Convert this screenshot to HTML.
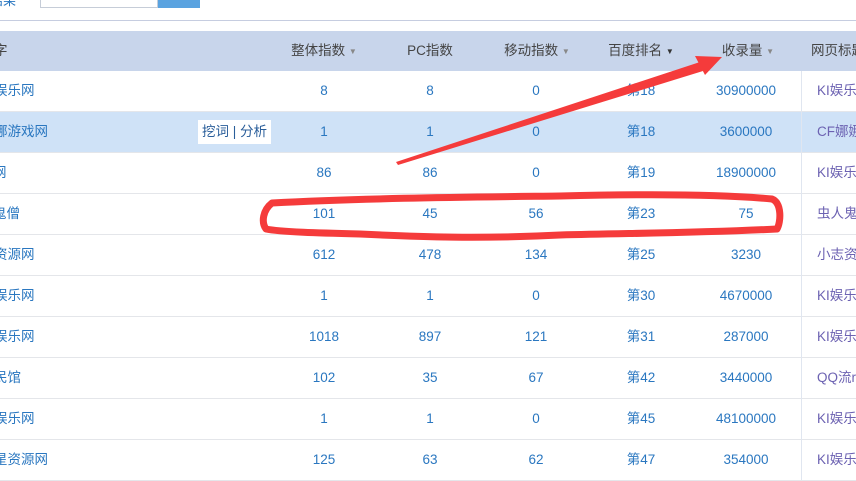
<!DOCTYPE html>
<html><head><meta charset="utf-8"><style>
*{margin:0;padding:0;box-sizing:border-box}
body{width:856px;height:480px;overflow:hidden;background:#fff;font-family:"Liberation Sans","Noto Sans CJK SC",sans-serif;font-size:13.5px;position:relative}
.abs{position:absolute}
.hdr{left:0;top:31px;width:856px;height:40px;background:#c8d5eb}
.h{position:absolute;top:31px;height:40px;line-height:40px;color:#444;font-size:13.5px;transform:translateX(-50%);white-space:nowrap}
.row{position:absolute;left:0;width:856px;height:41px;border-bottom:1px solid #e4e6ea}
.c{position:absolute;line-height:40px;color:#2a77c0;transform:translateX(-50%);white-space:nowrap}
.l{position:absolute;line-height:40px;color:#2a77c0;white-space:nowrap}
.t{position:absolute;left:817px;line-height:40px;color:#6c62b2;white-space:nowrap}
.tri{font-size:8px;color:#888;vertical-align:1px}
</style></head><body>
<div class="abs" style="left:-10px;top:-10px;color:#2a77c0;font-size:13px">结果</div>
<div class="abs" style="left:40px;top:-2px;width:118px;height:10px;border:1px solid #c6cdd8;border-top:none"></div>
<div class="abs" style="left:158px;top:0;width:42px;height:8px;background:#5aa3e0"></div>
<div class="abs" style="left:0;top:20px;width:856px;height:1px;background:#c6cde0"></div>
<div class="abs hdr"></div>
<div class="h" style="left:0;transform:translateX(-6px)">字</div>
<div class="h" style="left:324px">整体指数 <span class="tri">▼</span></div>
<div class="h" style="left:430px">PC指数</div>
<div class="h" style="left:537px">移动指数 <span class="tri">▼</span></div>
<div class="h" style="left:641px">百度排名 <span class="tri" style="color:#333">▼</span></div>
<div class="h" style="left:748px">收录量 <span class="tri">▼</span></div>
<div class="h" style="left:811px;transform:none">网页标题</div>
<div class="abs" style="left:801px;top:71px;width:1px;height:409px;background:#e0e6f0;z-index:2"></div>

<div class="row" style="top:71px"><span class="l" style="left:-6px">娱乐网</span><span class="c" style="left:324px">8</span><span class="c" style="left:430px">8</span><span class="c" style="left:536px">0</span><span class="c" style="left:641px">第18</span><span class="c" style="left:746px">30900000</span><span class="t">KI娱乐</span></div>
<div class="row" style="top:112px;background:#cfe2f7"><span class="l" style="left:-6px">娜游戏网</span><span class="abs" style="left:198px;top:8px;height:24px;width:73px;background:#fff;line-height:24px;text-align:center;color:#2a5e9a">挖词 | 分析</span><span class="c" style="left:324px">1</span><span class="c" style="left:430px">1</span><span class="c" style="left:536px">0</span><span class="c" style="left:641px">第18</span><span class="c" style="left:746px">3600000</span><span class="t">CF娜娜</span></div>
<div class="row" style="top:153px"><span class="l" style="left:-7px">网</span><span class="c" style="left:324px">86</span><span class="c" style="left:430px">86</span><span class="c" style="left:536px">0</span><span class="c" style="left:641px">第19</span><span class="c" style="left:746px">18900000</span><span class="t">KI娱乐</span></div>
<div class="row" style="top:194px"><span class="l" style="left:-7px">鬼僧</span><span class="c" style="left:324px">101</span><span class="c" style="left:430px">45</span><span class="c" style="left:536px">56</span><span class="c" style="left:641px">第23</span><span class="c" style="left:746px">75</span><span class="t">虫人鬼</span></div>
<div class="row" style="top:235px"><span class="l" style="left:-6px">资源网</span><span class="c" style="left:324px">612</span><span class="c" style="left:430px">478</span><span class="c" style="left:536px">134</span><span class="c" style="left:641px">第25</span><span class="c" style="left:746px">3230</span><span class="t">小志资</span></div>
<div class="row" style="top:276px"><span class="l" style="left:-6px">娱乐网</span><span class="c" style="left:324px">1</span><span class="c" style="left:430px">1</span><span class="c" style="left:536px">0</span><span class="c" style="left:641px">第30</span><span class="c" style="left:746px">4670000</span><span class="t">KI娱乐</span></div>
<div class="row" style="top:317px"><span class="l" style="left:-6px">娱乐网</span><span class="c" style="left:324px">1018</span><span class="c" style="left:430px">897</span><span class="c" style="left:536px">121</span><span class="c" style="left:641px">第31</span><span class="c" style="left:746px">287000</span><span class="t">KI娱乐</span></div>
<div class="row" style="top:358px"><span class="l" style="left:-6px">民馆</span><span class="c" style="left:324px">102</span><span class="c" style="left:430px">35</span><span class="c" style="left:536px">67</span><span class="c" style="left:641px">第42</span><span class="c" style="left:746px">3440000</span><span class="t">QQ流r</span></div>
<div class="row" style="top:399px"><span class="l" style="left:-6px">娱乐网</span><span class="c" style="left:324px">1</span><span class="c" style="left:430px">1</span><span class="c" style="left:536px">0</span><span class="c" style="left:641px">第45</span><span class="c" style="left:746px">48100000</span><span class="t">KI娱乐</span></div>
<div class="row" style="top:440px"><span class="l" style="left:-6px">星资源网</span><span class="c" style="left:324px">125</span><span class="c" style="left:430px">63</span><span class="c" style="left:536px">62</span><span class="c" style="left:641px">第47</span><span class="c" style="left:746px">354000</span><span class="t">KI娱乐</span></div>

<svg class="abs" style="left:0;top:0;z-index:5" width="856" height="480">
<polygon points="396,162 398,165 703,71 700,62" fill="#f53b3b"/>
<polygon points="722,57 695,56 705,75" fill="#f53b3b"/>
<path d="M272 203 C360 198 480 197 560 196 C640 194 720 194 772 199 C782 203 781 222 777 229 C700 233 640 233 560 235 C480 239 420 237 360 234 C320 233 280 232 266 229 C261 222 263 210 272 203 Z" fill="none" stroke="#f53b3b" stroke-width="7" stroke-linejoin="round"/>
</svg>
</body></html>
